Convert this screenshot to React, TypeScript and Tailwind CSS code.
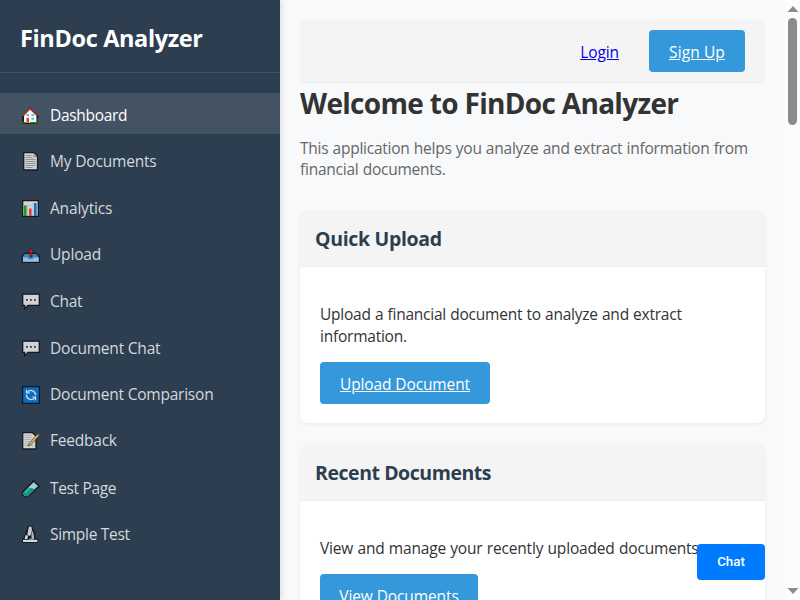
import type { ReactNode } from "react";

const House = () => (
  <>
    <path d="M2 11 L10 2 L18.5 11 V13 H17.5 V19 H2.5 V13 H2 Z" fill="#151515" />
    <path d="M4 10.5 L10 4.5 L16.5 10.5 V18 H4 Z" fill="#f5f5f5" />
    <path d="M3 11 L10 3.4 L17.3 11" fill="none" stroke="#d13b1e" strokeWidth="1.3" />
    <path d="M6.5 9h2.5v2H6.500zM11.500 9H14v2h-2.500zM11.500 12.800H14v2h-2.500z" fill="#3cc8f4" />
    <path d="M6.500 12.800h2.500V18H6.500z" fill="#e8402a" />
    <path d="M2.800 17h3.500v1.300H2.800zM10 17h7.300v1.300H10z" fill="#16a716" />
  </>
);
const Page = () => (
  <>
    <path d="M3.700 1.700 H14.500 L17.500 5 V19 H3.700 Z" fill="#d9dbdd" stroke="#161b20" strokeWidth="1.300" />
    <path d="M14 2.300 V5.500 H17" fill="none" stroke="#777" />
    <path d="M5.500 4.500h6M5.500 6.500h7M5.500 8.500h10M5.500 10.500h10M5.500 12.500h10M5.500 14.500h10M5.500 16.500h7" stroke="#8c9094" strokeWidth=".9" />
  </>
);
const Chart = () => (
  <>
    <path d="M2.700 2.700 H18.300 V18.300 H2.700 Z" fill="#dcdee0" stroke="#14181c" strokeWidth="1.300" />
    <path d="M7.500 3v15M13 3v15M3 7.500h15M3 12.500h15" stroke="#bfc3c7" strokeWidth=".6" />
    <path d="M4 7.500h2.600V18H4z" fill="#16a31d" />
    <path d="M9 10.500h2.600V18H9z" fill="#e74132" />
    <path d="M14 5h2.600v13H14z" fill="#1874c4" />
  </>
);
const Outbox = () => (
  <>
    <path d="M4.500 9.500 H16.500 L19.300 13 V18.300 H2.300 V13 Z" fill="#82b9e3" stroke="#141a20" strokeWidth="1.300" />
    <path d="M4.800 10.200H16L18.500 13.300H13.500L12.500 15H8.500L7.500 13.300H3Z" fill="#3c87c3" />
    <path d="M3 14h4.500l1 1.600h4l1-1.600h5.200v3.600H3z" fill="#9bc8e9" />
    <path d="M11 4.500 L14.200 8.300 H12 V13 H10 V8.300 H7.800 Z" fill="#d1152d" stroke="#3e1924" strokeWidth=".7" />
  </>
);
const Speech = () => (
  <>
    <path d="M2.700 3.200 H19.300 V14.300 H8 L4.700 17.700 V14.300 H2.700 Z" fill="#d9dbdd" stroke="#14181c" strokeWidth="1.300" />
    <path d="M6 8h1.800v1.800H6zM10 8h1.800v1.800H10zM14 8h1.800v1.800H14z" fill="#33383c" />
  </>
);
const Sync = () => (
  <>
    <path d="M2.600 2.600 H19.400 V19.400 H2.600 Z" fill="#0870ca" stroke="#10151b" strokeWidth="1.200" />
    <path d="M7.300 8.200 A4.700 4.700 0 0 1 15.600 11.300 M14.700 13.800 A4.700 4.700 0 0 1 6.400 10.700" fill="none" stroke="#d9e4ee" strokeWidth="1.300" />
    <path d="M6.500 5.700v3.100h3.100M15.500 16.300v-3.100h-3.100" fill="none" stroke="#d9e4ee" strokeWidth="1.200" />
  </>
);
const Memo = () => (
  <>
    <path d="M2.700 2.700 H12.500 L16 6 V19 H2.700 Z" fill="#d9dbdd" stroke="#161b20" strokeWidth="1.300" />
    <path d="M4.500 5.500h7M4.500 7.500h8M4.500 9.500h7M4.500 11.500h6M4.500 13.500h5M4.500 15.500h9" stroke="#a8acaf" strokeWidth=".8" />
    <path d="M8 16 L9.300 13.300 L17.500 4 L19.300 5.600 L10.800 14.800 Z" fill="#f2bd45" stroke="#2b2922" strokeWidth=".6" />
    <path d="M16.700 4.800 L17.700 3.600 L19.700 5.300 L18.700 6.500 Z" fill="#b85b5d" />
  </>
);
const Tube = () => (
  <>
    <path d="M13 2.500 L19.300 8.500 L17.600 9.200 L8.500 18.300 Q6 19.800 3.800 18 Q1.500 16 3.500 13.300 L12.700 4.300 Z" fill="#a9d4e8" stroke="#12181d" strokeWidth="1.300" />
    <path d="M8.500 9.500 L14.800 11 L8 17.800 Q6 19 4.300 17.500 Q2.500 15.700 4 13.800 Z" fill="#119b7e" />
    <path d="M5 15 L9.500 10.500" stroke="#4fc4a8" strokeWidth="1.100" />
  </>
);
const Microscope = () => (
  <>
    <path d="M8 1.500 H12 L13 5 L15.300 8 V14.500 H18.300 V19 H2 V15.500 L4 13 L6 7 Z" fill="#14191e" />
    <path d="M8.900 2.700 L11.300 2.500 L12 6 L10.300 12 L7.200 11 Z" fill="#d4d7da" />
    <path d="M12 6.500 Q14.300 9 14 15.500 H11.500 V9 Z" fill="#b5bbc0" />
    <path d="M5.600 11 L8 11.700 L7.300 15 H4.600 Z" fill="#e1e4e6" />
    <path d="M3 15.800 H17.400 V18 H3 Z" fill="#d3e5ef" />
    <path d="M9.500 14.500h3v1.500h-3z" fill="#55b3df" />
  </>
);

type Item = { label: string; icon: ReactNode; row: string; text: string };

const items: Item[] = [
  { label: "Dashboard", icon: <House />, row: "h-[41px]", text: "tracking-[-0.3px]" },
  { label: "My Documents", icon: <Page />, row: "h-[42px]", text: "tracking-[-0.18px]" },
  { label: "Analytics", icon: <Chart />, row: "h-[41px]", text: "tracking-[-0.18px]" },
  { label: "Upload", icon: <Outbox />, row: "h-[42px]", text: "tracking-[-0.18px]" },
  { label: "Chat", icon: <Speech />, row: "h-[42px]", text: "tracking-[-0.3px]" },
  { label: "Document Chat", icon: <Speech />, row: "h-[41px]", text: "tracking-[-0.2px]" },
  { label: "Document Comparison", icon: <Sync />, row: "h-[41px]", text: "tracking-[-0.22px]" },
  { label: "Feedback", icon: <Memo />, row: "h-[43px]", text: "tracking-[-0.22px]" },
  { label: "Test Page", icon: <Tube />, row: "h-[41px]", text: "tracking-[-0.35px]" },
  { label: "Simple Test", icon: <Microscope />, row: "h-[41px]", text: "tracking-[-0.3px]" },
];

function Sidebar() {
  return (
    <aside className="h-full w-[280px] shrink-0 bg-[#2c3e50] text-white shadow-[2px_0_5px_rgba(0,0,0,0.1)]">
      <div className="h-[73px] border-b border-white/10 px-5 pt-[22px]">
        <h2 className="text-[23.500px] leading-8 font-bold tracking-[-0.36px] whitespace-nowrap">FinDoc Analyzer</h2>
      </div>
      <nav className="flex flex-col gap-[5px] pt-5">
        {items.map((item, i) => (
          <a
            key={item.label}
            className={`flex items-start px-5 pt-3 ${item.row} ${i === 0 ? "bg-[#435363] text-white" : "text-[#d5d8dc]"}`}
          >
            <svg viewBox="0 0 20 20" className="mr-[10px] h-5 w-5 shrink-0 overflow-visible" opacity={i === 0 ? 1 : 0.95}>
              {item.icon}
            </svg>
            <span className={`text-[15.500px] leading-5 whitespace-nowrap ${item.text}`}>{item.label}</span>
          </a>
        ))}
      </nav>
    </aside>
  );
}

function Card({ title, titleText, children }: { title: string; titleText: string; children: ReactNode }) {
  return (
    <section className="h-[213px] shrink-0 overflow-hidden rounded-lg bg-white shadow-[0_2px_4px_rgba(0,0,0,0.05)]">
      <div className="h-[57px] border-b border-[#eeeeee] bg-[#f4f4f4] px-[15px] pt-[15px]">
        <h3 className={`text-[19.500px] leading-[27px] font-bold text-[#2c3e50] ${titleText}`}>{title}</h3>
      </div>
      <div className="flex flex-col items-start px-5 pt-9 text-[15.500px] leading-[22px] whitespace-nowrap text-[#333]">
        {children}
      </div>
    </section>
  );
}

function Scrollbar() {
  return (
    <div className="flex h-full w-[15px] shrink-0 flex-col items-center justify-between bg-[#fcfcfc] pt-[6px] pb-[6px]">
      <div className="flex flex-col items-center gap-[6px]">
        <svg viewBox="0 0 12 6" className="h-[6px] w-3">
          <path d="M6 0 L11.500 6 H.5 Z" fill="#8b8b8b" />
        </svg>
        <div className="h-[107px] w-[9px] rounded-full bg-[#8b8b8b]" />
      </div>
      <svg viewBox="0 0 12 6" className="h-[6px] w-3">
        <path d="M6 6 L11.500 0 H.5 Z" fill="#8b8b8b" />
      </svg>
    </div>
  );
}

export default function App() {
  return (
    <div className="relative flex h-[600px] w-[800px] overflow-hidden bg-[#f8f9fb] font-['Open_Sans','Noto_Sans',sans-serif]">
      <Sidebar />
      <main className="flex min-w-0 flex-1 flex-col px-5 pt-5">
        <header className="flex h-[63px] shrink-0 items-start justify-end border-b border-[#f0f0f0] bg-[#f4f4f4] pt-[10px] pr-5 text-[15.500px]">
          <a className="mt-[11px] mr-[30px] leading-[22px] tracking-[-0.1px] text-[#0000ee] underline">Login</a>
          <a className="flex h-[42px] w-24 items-center justify-center rounded bg-[#3498db] pt-1 tracking-[0.1px] text-white underline">
            Sign Up
          </a>
        </header>
        <h1 className="mt-[1px] text-[28px] leading-[38px] font-bold tracking-[-0.68px] whitespace-nowrap text-[#333]">
          Welcome to FinDoc Analyzer
        </h1>
        <p className="mt-4 mb-[30px] text-[15.500px] leading-[21px] tracking-[-0.24px] [word-spacing:0.4px] whitespace-nowrap text-[#666]">
          This application helps you analyze and extract information from
          <br />
          financial documents.
        </p>
        <div className="flex flex-col gap-[21px]">
          <Card title="Quick Upload" titleText="tracking-[-0.33px]">
            <p className="tracking-[-0.23px] [word-spacing:0.4px]">
              Upload a financial document to analyze and extract
              <br />
              information.
            </p>
            <a className="mt-[15px] flex h-[42px] w-[170px] items-center justify-center rounded bg-[#3498db] pt-[2px] tracking-[-0.12px] text-white underline">
              Upload Document
            </a>
          </Card>
          <Card title="Recent Documents" titleText="tracking-[-0.45px]">
            <p className="tracking-[-0.17px] [word-spacing:0.4px]">View and manage your recently uploaded documents.</p>
            <a className="mt-[15px] flex h-[42px] w-[158px] items-center justify-center rounded bg-[#3498db] pt-[2px] tracking-[-0.1px] text-white underline">
              View Documents
            </a>
          </Card>
        </div>
      </main>
      <Scrollbar />
      <button className="absolute top-[544px] left-[697px] h-9 w-[68px] rounded bg-[#007bff] font-['Roboto','Liberation_Sans',sans-serif] text-[13.333px] font-medium text-white">
        Chat
      </button>
    </div>
  );
}
